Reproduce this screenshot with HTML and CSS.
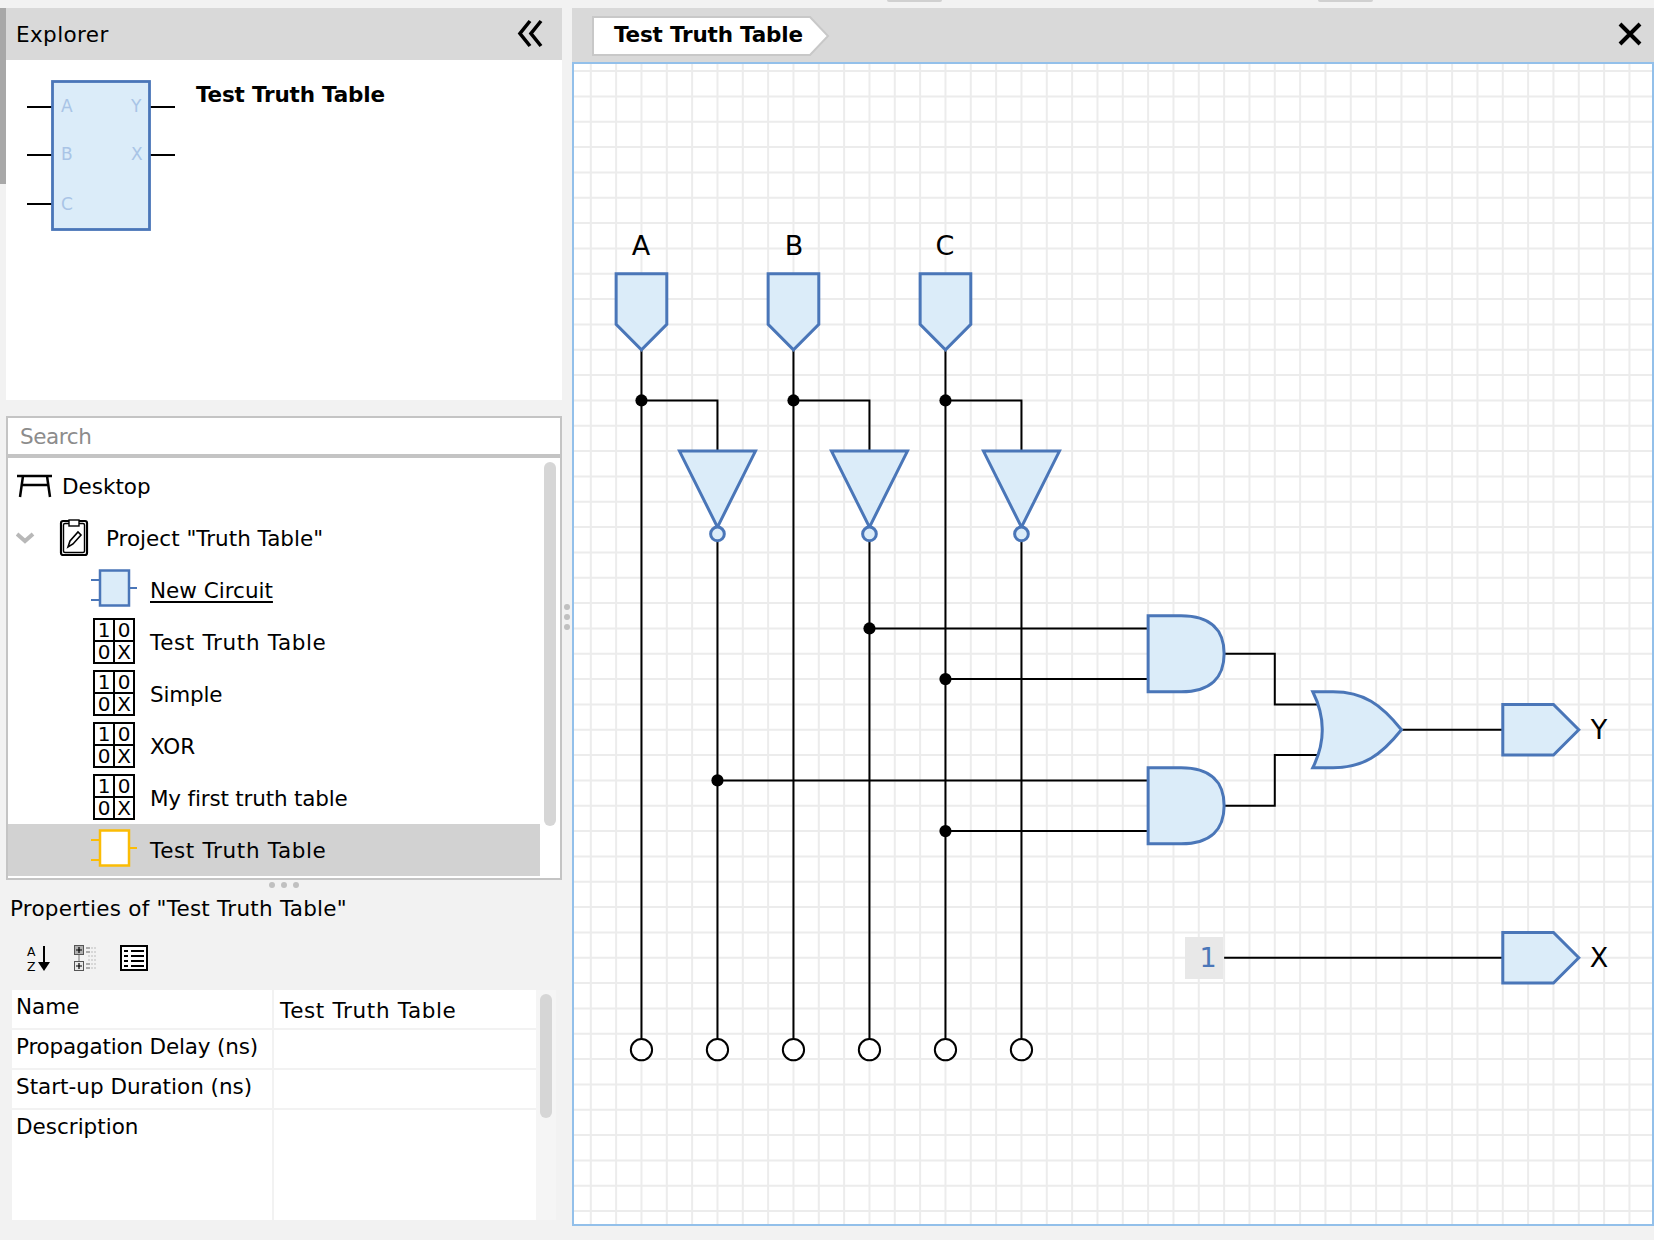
FILE: index.html
```html
<!DOCTYPE html>
<html lang="en">
<head>
<meta charset="utf-8">
<title>Test Truth Table</title>
<link rel="stylesheet" href="styles.css">
</head>
<body>
<div class="top-edge"><span class="nub nub-a"></span><span class="nub nub-b"></span></div>
<div class="app">
  <div class="rail"><div class="rail-thumb"></div></div>
  <aside class="left">
    <header class="explorer-head">
      <span class="explorer-title">Explorer</span>
      <svg class="collapse" width="30" height="30" viewBox="0 0 30 30"><path d="M13 2 3 14.5 13 27M24 2 14 14.5 24 27"/></svg>
    </header>
    <section class="preview">
      <svg class="preview-chip" width="190" height="340" viewBox="0 0 190 340">
        <path class="pin" d="M21 47H46M21 95H46M21 144H46M143 47H169M143 95H169"/>
        <rect class="chip" x="46.5" y="21.5" width="97" height="148"/>
        <text class="chip-label" x="55" y="52">A</text>
        <text class="chip-label" x="55" y="100">B</text>
        <text class="chip-label" x="55" y="150">C</text>
        <text class="chip-label" x="125" y="52">Y</text>
        <text class="chip-label" x="125" y="100">X</text>
      </svg>
      <h1 class="preview-title">Test Truth Table</h1>
    </section>
    <div class="search">Search</div>
    <div class="list">
      <div class="rows">
        <div class="row row-top">
          <svg class="ico-desk" width="38" height="26" viewBox="0 0 38 26"><path d="M1 3H36M7 3 4 24M31 3 34 24M6 12H32"/></svg>
          <span class="label">Desktop</span>
        </div>
        <div class="row row-top">
          <svg class="ico-chev" width="22" height="12" viewBox="0 0 22 12"><path d="M1 2 9 9 17 2"/></svg>
          <svg class="ico-clip" width="30" height="38" viewBox="0 0 30 38">
            <rect class="clip-outer" x="2" y="2" width="26" height="34" rx="2"/>
            <rect class="clip-inner" x="4.5" y="4.5" width="21" height="29" rx="1.5"/>
            <rect class="clip-tab" x="10" y="1" width="10" height="6"/>
            <path class="clip-pen" d="M9 28 11 22 19 13 22 16 14 25Z"/>
          </svg>
          <span class="label">Project "Truth Table"</span>
        </div>
        <div class="row row-item">
          <svg class="ico-circ" width="48" height="40" viewBox="0 0 48 40"><path d="M0 11H9M0 31H9M38 19H46"/><rect x="9" y="1.5" width="29" height="35"/></svg>
          <span class="label link">New Circuit</span>
        </div>
        <div class="row row-item">
          <div class="tt"><span>1</span><span>0</span><span>0</span><span>X</span></div>
          <span class="label ttt">Test Truth Table</span>
        </div>
        <div class="row row-item">
          <div class="tt"><span>1</span><span>0</span><span>0</span><span>X</span></div>
          <span class="label tight">Simple</span>
        </div>
        <div class="row row-item">
          <div class="tt"><span>1</span><span>0</span><span>0</span><span>X</span></div>
          <span class="label">XOR</span>
        </div>
        <div class="row row-item">
          <div class="tt"><span>1</span><span>0</span><span>0</span><span>X</span></div>
          <span class="label tight">My first truth table</span>
        </div>
        <div class="row row-item row-selected">
          <svg class="ico-circ ico-sel" width="48" height="40" viewBox="0 0 48 40"><path d="M0 11H9M0 31H9M38 19H46"/><rect x="9" y="1.5" width="29" height="35"/></svg>
          <span class="label ttt">Test Truth Table</span>
        </div>
      </div>
      <div class="track"><div class="thumb thumb-list"></div></div>
    </div>
    <div class="hsplit"><i></i><i></i><i></i></div>
    <div class="prop-title">Properties of "Test Truth Table"</div>
    <div class="prop-tools">
      <svg class="az-icon" width="28" height="32" viewBox="0 -3 28 32">
        <text class="az" x="3" y="11">A</text>
        <text class="az" x="3" y="25.5">Z</text>
        <path class="az-line" d="M20 1V18"/>
        <path d="M14 17H26L20 26Z"/>
      </svg>
      <svg width="24" height="26" viewBox="0 0 24 26">
        <rect class="tree-box" x="0.5" y="0.5" width="9" height="9"/>
        <rect class="tree-box2" x="0.5" y="16.5" width="9" height="9"/>
        <path class="tree-plus" d="M2 5H8M5 2V8M2 21H8M5 18V24"/>
        <path class="tree-link" d="M5 10V16"/>
        <path class="tree-dash" d="M12 3H16M12 7H16M12 19H16M12 23H16"/>
        <path class="tree-dash2" d="M17 3H22M17 7H22M14 11H22M14 15H22M17 19H22M17 23H22"/>
      </svg>
      <svg width="28" height="26" viewBox="0 0 28 26">
        <rect class="list-box" x="1" y="1" width="26" height="24"/>
        <path class="list-lines" d="M4 6H8M11 6H24M4 11H8M11 11H24M4 16H8M11 16H24M4 21H8M11 21H24"/>
      </svg>
    </div>
    <div class="prop-wrap">
      <div class="prop-table">
        <div class="cell">Name</div><div class="cell cell-value ttt">Test Truth Table</div>
        <div class="cell tight">Propagation Delay (ns)</div><div class="cell"></div>
        <div class="cell">Start-up Duration (ns)</div><div class="cell"></div>
        <div class="cell">Description</div><div class="cell"></div>
      </div>
      <div class="prop-track"><div class="thumb thumb-prop"></div></div>
    </div>
  </aside>
  <div class="vsplit"><i></i><i></i><i></i></div>
  <main class="right">
    <header class="canvas-head">
      <div class="tab">
        <div class="tab-body">Test Truth Table</div>
        <svg class="tab-tip" width="22" height="40" viewBox="0 0 22 40"><path class="tab-fill" d="M0 1H2L20 20 2 39H0Z"/><path class="tab-edge" d="M0 1H2L20 20 2 39H0"/></svg>
      </div>
      <svg class="close" width="24" height="24" viewBox="0 0 24 24"><path d="M2 2 22 22M22 2 2 22"/></svg>
    </header>
    <div class="canvas">
      <svg class="board" width="1078" height="1160" viewBox="574 64 1078 1160">
        <g transform="translate(590.8 71.1) scale(25.333)">
          <path class="grid" d="M0-1V46M1-1V46M2-1V46M3-1V46M4-1V46M5-1V46M6-1V46M7-1V46M8-1V46M9-1V46M10-1V46M11-1V46M12-1V46M13-1V46M14-1V46M15-1V46M16-1V46M17-1V46M18-1V46M19-1V46M20-1V46M21-1V46M22-1V46M23-1V46M24-1V46M25-1V46M26-1V46M27-1V46M28-1V46M29-1V46M30-1V46M31-1V46M32-1V46M33-1V46M34-1V46M35-1V46M36-1V46M37-1V46M38-1V46M39-1V46M40-1V46M41-1V46M-1 0H42M-1 1H42M-1 2H42M-1 3H42M-1 4H42M-1 5H42M-1 6H42M-1 7H42M-1 8H42M-1 9H42M-1 10H42M-1 11H42M-1 12H42M-1 13H42M-1 14H42M-1 15H42M-1 16H42M-1 17H42M-1 18H42M-1 19H42M-1 20H42M-1 21H42M-1 22H42M-1 23H42M-1 24H42M-1 25H42M-1 26H42M-1 27H42M-1 28H42M-1 29H42M-1 30H42M-1 31H42M-1 32H42M-1 33H42M-1 34H42M-1 35H42M-1 36H42M-1 37H42M-1 38H42M-1 39H42M-1 40H42M-1 41H42M-1 42H42M-1 43H42M-1 44H42M-1 45H42"/>
          <path class="wire" d="M2 11V38.2M5 18.5V38.2M8 11V38.2M11 18.5V38.2M14 11V38.2M17 18.5V38.2M2 13H5V15M8 13H11V15M14 13H17V15M11 22H22M14 24H22M5 28H22M14 30H22M25 23H27V25H28.8M25 29H27V27H28.8M32 26H36M25 35H36"/>
          <g class="dots">
            <circle cx="2" cy="13" r=".24"/><circle cx="8" cy="13" r=".24"/><circle cx="14" cy="13" r=".24"/>
            <circle cx="11" cy="22" r=".24"/><circle cx="14" cy="24" r=".24"/><circle cx="5" cy="28" r=".24"/><circle cx="14" cy="30" r=".24"/>
          </g>
          <g class="part">
            <path d="M1 8H3V10L2 11 1 10Z"/><path d="M7 8H9V10L8 11 7 10Z"/><path d="M13 8H15V10L14 11 13 10Z"/>
            <path d="M3.5 15H6.5L5 18Z"/><path d="M9.5 15H12.5L11 18Z"/><path d="M15.5 15H18.5L17 18Z"/>
            <circle cx="5" cy="18.27" r=".27"/><circle cx="11" cy="18.27" r=".27"/><circle cx="17" cy="18.27" r=".27"/>
            <path d="M22 21.5H23.3C24.5 21.5 25 22.1 25 23 25 23.9 24.5 24.5 23.3 24.5H22Z"/>
            <path d="M22 27.5H23.3C24.5 27.5 25 28.1 25 29 25 29.9 24.5 30.5 23.3 30.5H22Z"/>
            <path d="M28.5 24.5H29.3C30.5 24.5 31.2 25 32 26 31.2 27 30.5 27.5 29.3 27.5H28.5C29 26.5 29 25.5 28.5 24.5Z"/>
            <path d="M36 25H38L39 26 38 27H36Z"/><path d="M36 34H38L39 35 38 36H36Z"/>
          </g>
          <g class="probe">
            <circle cx="2" cy="38.63" r=".42"/><circle cx="5" cy="38.63" r=".42"/><circle cx="8" cy="38.63" r=".42"/>
            <circle cx="11" cy="38.63" r=".42"/><circle cx="14" cy="38.63" r=".42"/><circle cx="17" cy="38.63" r=".42"/>
          </g>
        </g>
        <rect class="const-bg" x="1185" y="937" width="38" height="42"/>
        <text class="const" x="1208" y="967" text-anchor="middle">1</text>
        <text class="pin-label" x="641" y="255" text-anchor="middle">A</text>
        <text class="pin-label" x="794" y="255" text-anchor="middle">B</text>
        <text class="pin-label" x="945" y="255" text-anchor="middle">C</text>
        <text class="pin-label" x="1599" y="739" text-anchor="middle">Y</text>
        <text class="pin-label" x="1599" y="967" text-anchor="middle">X</text>
      </svg>
    </div>
  </main>
</div>
</body>
</html>
```

FILE: styles.css
```css
* { box-sizing: border-box; }
html, body { margin: 0; padding: 0; }
body {
  width: 1654px;
  height: 1240px;
  overflow: hidden;
  background: #f2f2f2;
  color: #000;
  font-family: "DejaVu Sans", "Liberation Sans", sans-serif;
  font-size: 21.5px;
}
.top-edge { display: flex; height: 8px; }
.nub { height: 2px; width: 55px; background: #d0d0d0; border-radius: 0 0 3px 3px; }
.nub-a { margin-left: 887px; }
.nub-b { margin-left: 376px; }

.app { display: flex; height: 1218px; }
.rail { width: 6px; }
.rail-thumb { height: 176px; background: #a8a8a8; }
.left { width: 556px; display: flex; flex-direction: column; }

.explorer-head {
  height: 52px;
  background: #d9d9d9;
  display: flex;
  align-items: center;
  justify-content: space-between;
  padding: 0 15px 0 10px;
}
.explorer-title { letter-spacing: .4px; }
.collapse path { fill: none; stroke: #000; stroke-width: 3.6; }

.preview { height: 340px; background: #fff; display: flex; align-items: flex-start; }
.preview-chip { display: block; flex: none; }
.pin { stroke: #000; stroke-width: 2; fill: none; }
.chip { fill: #dbecf9; stroke: #4a76b8; stroke-width: 2.8; }
.chip-label { font-size: 17px; fill: #a9c4e6; }
.preview-title { margin: 21px 0 0; font-size: 21.5px; font-weight: 700; line-height: 28px; letter-spacing: -.2px; }

.search {
  margin-top: 16px;
  height: 42px;
  background: #fff;
  border: solid #c4c4c4;
  border-width: 2px 2px 4px;
  color: #8c8c8c;
  line-height: 38px;
  padding-left: 12px;
  letter-spacing: -.4px;
}
.list {
  height: 422px;
  background: #fff;
  border: solid #c4c4c4;
  border-width: 0 2px 2px;
  padding-top: 2px;
  display: flex;
}
.rows { width: 532px; }
.row { height: 52px; display: flex; align-items: center; padding-bottom: 2px; }
.row-top { padding-left: 8px; }
.row-top:first-child svg { margin-right: 8px; }
.row-item { padding-left: 83px; }
.row-selected { background: #d2d2d2; }
.label { padding-top: 2px; }
.ttt { letter-spacing: .65px; }
.tight { letter-spacing: -.18px; }
.ico-desk, .ico-chev, .ico-clip, .ico-circ { flex: none; display: block; }
.ico-desk { margin-top: 2px; }
.ico-desk path { fill: none; stroke: #000; stroke-width: 2.5; }
.ico-chev path { fill: none; stroke: #b8b8b8; stroke-width: 4; }
.ico-chev { margin-right: 21px; margin-top: 2px; }
.ico-clip { margin-right: 17px; margin-top: 2px; }
.clip-outer { fill: #fff; stroke: #000; stroke-width: 2.2; }
.clip-inner { fill: #fff; stroke: #000; stroke-width: 1.4; }
.clip-tab { fill: #fff; stroke: #000; stroke-width: 1.4; }
.clip-pen { fill: none; stroke: #000; stroke-width: 1.6; }
.ico-circ { margin-right: 11px; }
.ico-circ path { stroke: #4a76b8; stroke-width: 2; fill: none; }
.ico-circ rect { fill: #dbecf9; stroke: #4a76b8; stroke-width: 2.5; }
.ico-sel path { stroke: #fbbc05; }
.ico-sel rect { fill: #fff; stroke: #fbbc05; }
.row-item > .tt { margin-left: 2px; margin-right: 15px; }
.tt {
  flex: none;
  width: 42px;
  height: 46px;
  display: grid;
  grid-template: 1fr 1fr / 1fr 1fr;
  gap: 2px;
  padding: 2px;
  background: #000;
  font-size: 20px;
  line-height: 20px;
}
.tt span { background: #fff; text-align: center; }
.link { text-decoration: underline; text-underline-offset: 3px; }
.track { width: 20px; padding: 2px 4px 0; }
.thumb { background: #d6d6d6; border-radius: 6px; }
.thumb-list { height: 364px; }

.hsplit { height: 10px; display: flex; align-items: center; justify-content: center; gap: 6px; }
.hsplit i, .vsplit i { display: block; width: 6px; height: 6px; border-radius: 50%; background: #c0c0c0; }
.prop-title { height: 36px; line-height: 38px; padding-left: 4px; letter-spacing: .25px; }
.prop-tools { display: flex; gap: 22px; padding: 19px 0 0 18px; height: 64px; }
.prop-tools svg { display: block; }
.az-icon { margin-top: -3px; }
.az { font-size: 12.4px; }
.az-line { stroke: #000; stroke-width: 2; fill: none; }
.tree-box { fill: #b0b0b0; stroke: #555; }
.tree-box2 { fill: #e8e8e8; stroke: #555; }
.tree-plus { stroke: #000; stroke-width: 1.2; fill: none; }
.tree-link { stroke: #777; fill: none; }
.tree-dash { stroke: #666; stroke-width: 1.2; fill: none; }
.tree-dash2 { stroke: #bbb; stroke-width: 1.2; stroke-dasharray: 2 1; fill: none; }
.list-box { fill: #fff; stroke: #000; stroke-width: 2; }
.list-lines { stroke: #000; stroke-width: 2; fill: none; }

.prop-wrap { display: flex; margin-left: 6px; height: 230px; }
.prop-table {
  width: 524px;
  display: grid;
  grid-template-columns: 260px 262px;
  grid-template-rows: 38px 38px 38px 110px;
  gap: 2px;
}
.cell { background: #fff; padding: 4px 0 0 4px; line-height: 26px; white-space: nowrap; }
.cell-value { padding: 9px 0 0 6px; line-height: 24px; }
.prop-track { width: 20px; background: #f5f5f5; padding: 4px; }
.thumb-prop { height: 124px; }

.vsplit { width: 10px; display: flex; flex-direction: column; align-items: center; justify-content: center; gap: 4px; }
.right { flex: 1; display: flex; flex-direction: column; min-width: 0; }
.canvas-head {
  height: 54px;
  background: #d9d9d9;
  display: flex;
  align-items: flex-start;
  justify-content: space-between;
  padding: 8px 12px 0 20px;
}
.tab { display: flex; }
.tab-body {
  height: 40px;
  background: #fff;
  border: solid #c8c8c8;
  border-width: 2px 0 2px 2px;
  font-weight: 700;
  line-height: 34px;
  padding: 0 24px 0 20px;
  letter-spacing: -.2px;
  width: 216px;
  white-space: nowrap;
}
.tab-tip { display: block; }
.tab-fill { fill: #fff; }
.tab-edge { fill: none; stroke: #c8c8c8; stroke-width: 2; }
.close { margin-top: 6px; display: block; }
.close path { fill: none; stroke: #000; stroke-width: 4; }

.canvas { height: 1164px; border: 2px solid #93c0ea; background: #fff; overflow: hidden; }
.board { display: block; }
.grid { fill: none; stroke: #ececec; stroke-width: 2; vector-effect: non-scaling-stroke; }
.wire { fill: none; stroke: #000; stroke-width: 2; vector-effect: non-scaling-stroke; }
.dots circle { fill: #000; }
.part path, .part circle { fill: #dbecf9; stroke: #4a76b8; stroke-width: 3; vector-effect: non-scaling-stroke; }
.probe circle { fill: #fff; stroke: #000; stroke-width: 2; vector-effect: non-scaling-stroke; }
.const-bg { fill: #e8e8e8; }
.const { font-size: 27px; fill: #4a76b8; }
.pin-label { font-size: 27px; fill: #000; }
```
